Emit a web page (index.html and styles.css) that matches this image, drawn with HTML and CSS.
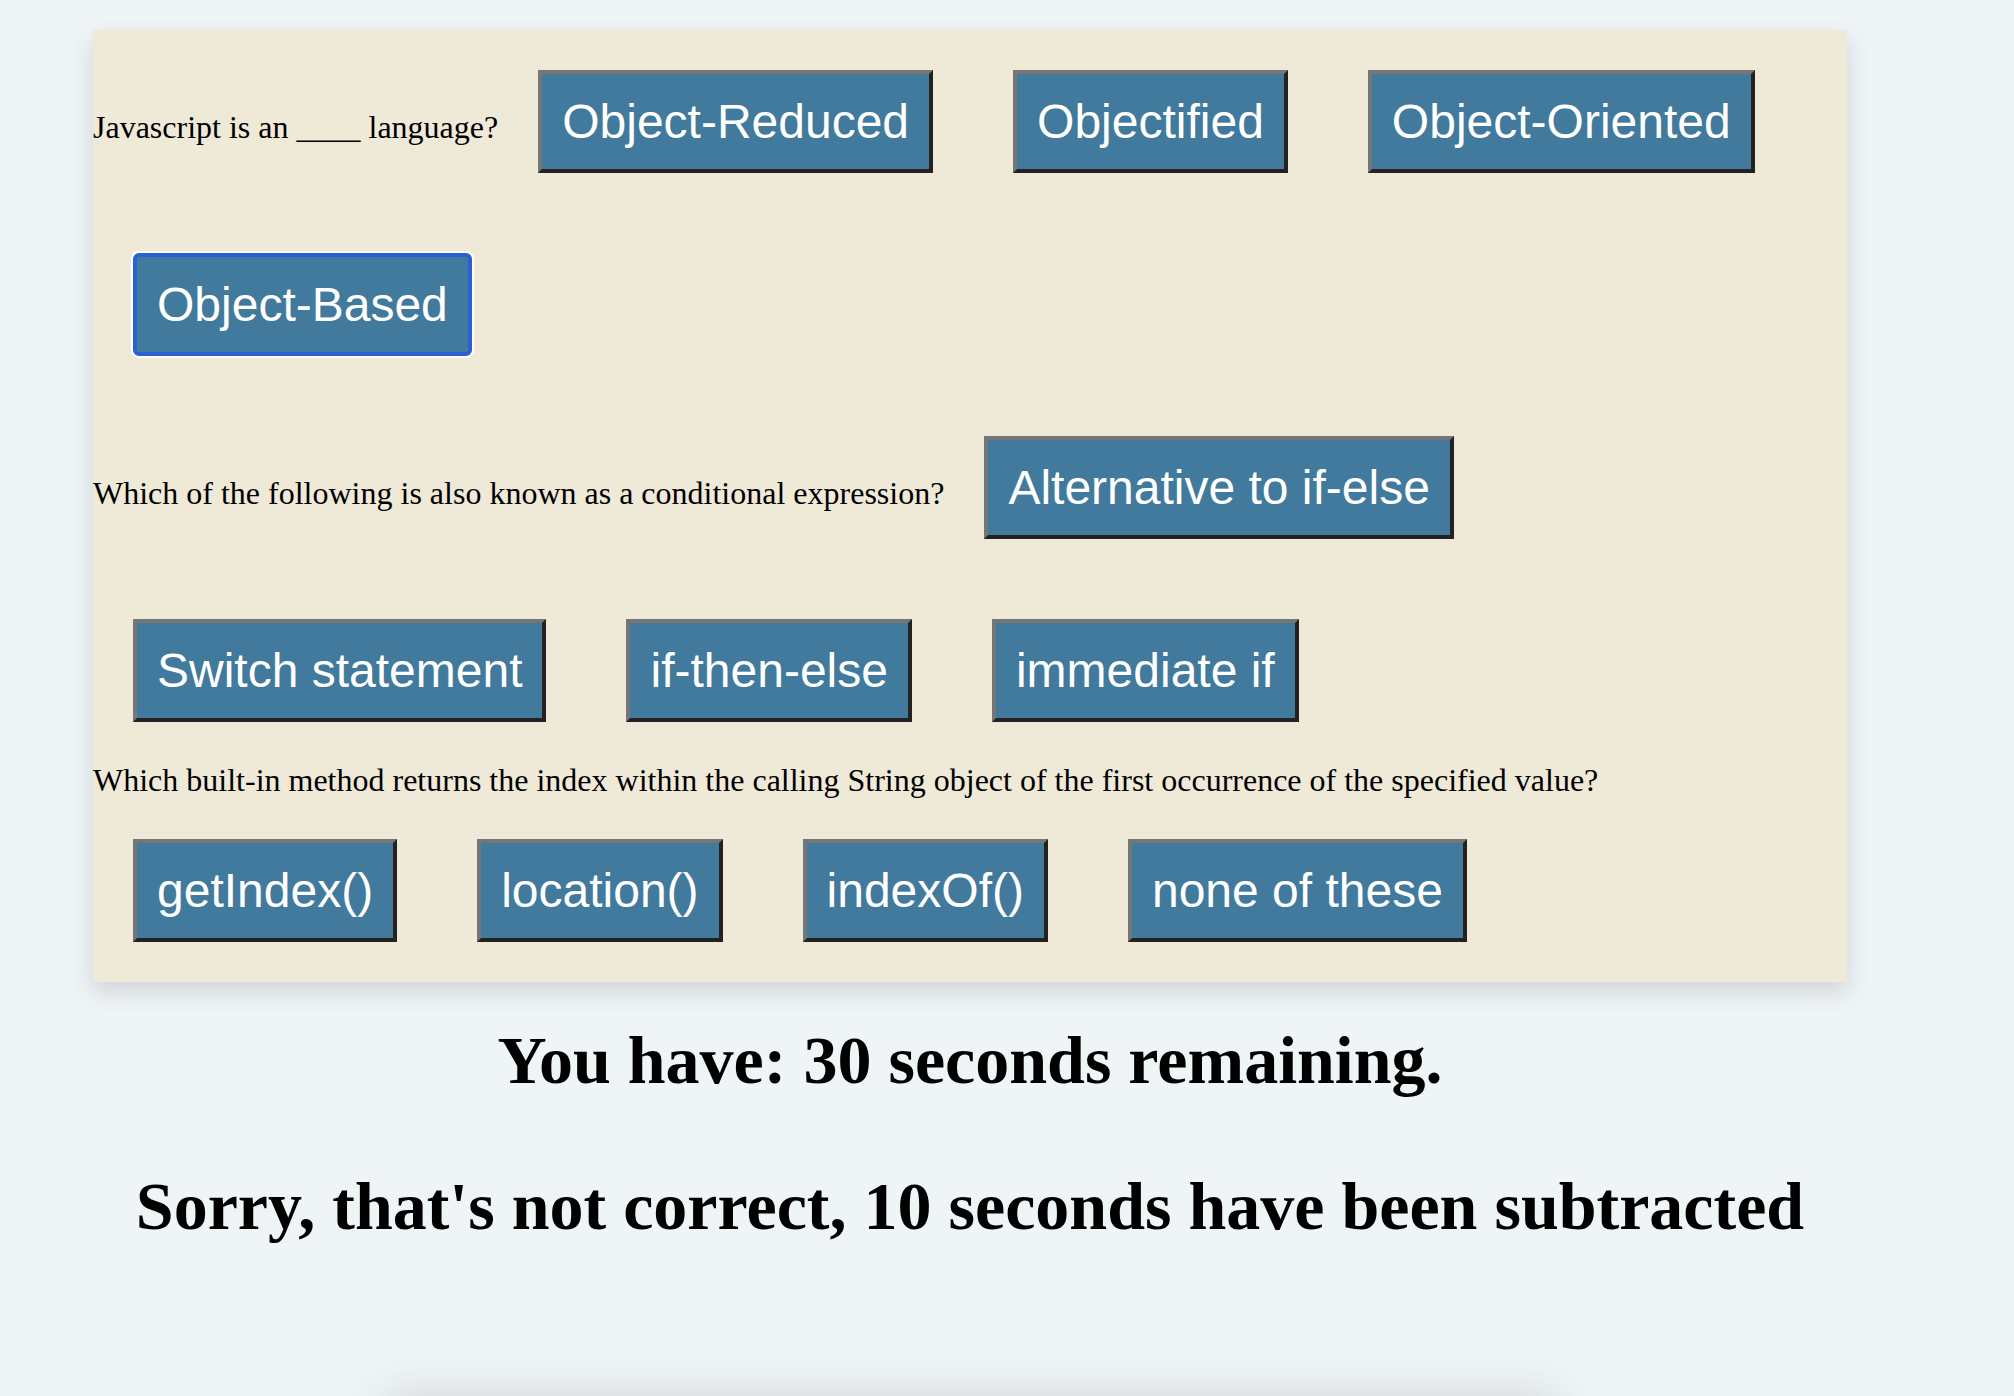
FILE: index.html
```html
<!DOCTYPE html>
<html lang="en">
<head>
<meta charset="utf-8">
<title>Code Quiz</title>
<link rel="stylesheet" href="styles.css">
</head>
<body>
<main class="container">
  <section class="quiz-card">
    <div class="question">Javascript is an ____ language?<button class="choice">Object-Reduced</button><button class="choice">Objectified</button><button class="choice">Object-Oriented</button><button class="choice focused">Object-Based</button></div>
    <div class="question">Which of the following is also known as a conditional expression?<button class="choice">Alternative to if-else</button><button class="choice">Switch statement</button><button class="choice">if-then-else</button><button class="choice">immediate if</button></div>
    <div class="question">Which built-in method returns the index within the calling String object of the first occurrence of the specified value?<button class="choice">getIndex()</button><button class="choice">location()</button><button class="choice">indexOf()</button><button class="choice">none of these</button></div>
  </section>
  <h1 class="timer">You have: 30 seconds remaining.</h1>
  <h2 class="feedback">Sorry, that's not correct, 10 seconds have been subtracted</h2>
  <div class="next-card"></div>
</main>
</body>
</html>
```
FILE: styles.css
```css
html {
  overflow: hidden;
}

body {
  margin: 0;
  background: #eff4f7;
  font-family: "Liberation Serif", "Times New Roman", serif;
  color: #000;
}

.container {
  width: 1754px;
  margin: 0 0 0 93px;
  padding-top: 30px;
}

.quiz-card {
  background: #efe9d8;
  box-shadow: 0 10px 22px rgba(60, 70, 80, 0.18);
}

.question {
  font-size: 32px;
  line-height: 37px;
}

.choice {
  display: inline-block;
  margin: 40px;
  padding: 20px;
  font-family: "Liberation Sans", Arial, Helvetica, sans-serif;
  font-size: 48px;
  line-height: 55px;
  color: #fff;
  background: #417a9c;
  border: 4px solid;
  border-color: #767676 #222222 #222222 #767676;
  border-radius: 0;
  cursor: pointer;
}

.choice.focused {
  border: 4px solid #2c5fcf;
  border-radius: 6px;
  box-shadow: 0 0 0 2px #ffffff;
}

.timer,
.feedback {
  font-size: 68px;
  line-height: 78px;
  font-weight: bold;
  text-align: center;
}

.timer {
  margin: 39px 0 0;
}

.feedback {
  margin: 68px 0 0;
}

.next-card {
  width: 1170px;
  height: 300px;
  margin: 152px auto 0;
  background: #efe9d8;
  box-shadow: 0 0 45px rgba(60, 70, 80, 0.18);
}
```
